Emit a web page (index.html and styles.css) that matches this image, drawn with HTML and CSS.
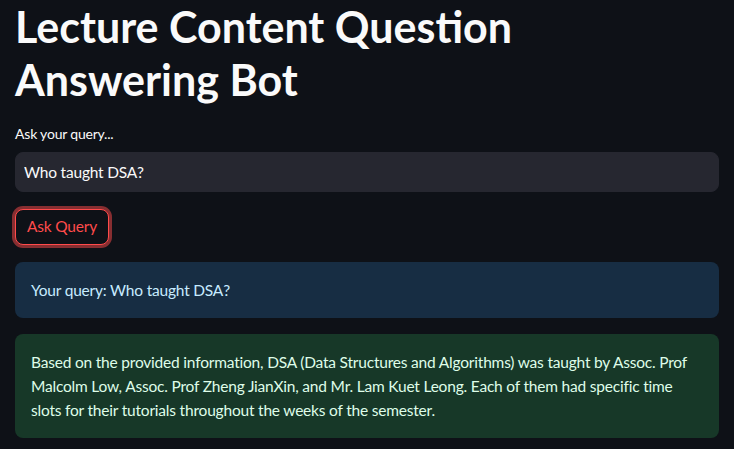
FILE: index.html
```html
<!DOCTYPE html>
<html>
<head>
<meta charset="utf-8">
<link rel="stylesheet" href="styles.css">
</head>
<body>
<main class="page">
  <h1 class="title">Lecture Content Question Answering Bot</h1>
  <div class="field">
    <label class="field-label" for="q">Ask your query...</label>
    <input class="field-input" id="q" type="text" value="Who taught DSA?">
  </div>
  <div class="actions">
    <button class="btn">Ask Query</button>
  </div>
  <div class="alert alert-info">Your query: Who taught DSA?</div>
  <div class="alert alert-success">Based on the provided information, DSA (Data Structures and Algorithms) was taught by Assoc. Prof Malcolm Low, Assoc. Prof Zheng JianXin, and Mr. Lam Kuet Leong. Each of them had specific time slots for their tutorials throughout the weeks of the semester.</div>
</main>
</body>
</html>
```
FILE: styles.css
```css
html, body {
  margin: 0;
  padding: 0;
  background: #0e1117;
  color: #fafafa;
  font-family: Lato, "Noto Sans", sans-serif;
}
.page {
  width: 704px;
  padding: 0 15px;
  display: flex;
  flex-direction: column;
}
.title {
  margin: 0;
  font-size: 43px;
  font-weight: 700;
  line-height: 53px;
  color: #fafafa;
}
.field {
  margin-top: 17px;
  display: flex;
  flex-direction: column;
  gap: 8px;
}
.field-label {
  font-size: 14px;
  line-height: 21px;
  letter-spacing: -0.2px;
  color: #fafafa;
}
.field-input {
  box-sizing: border-box;
  height: 40px;
  width: 100%;
  margin: 0;
  padding: 0 8px;
  border: 1px solid #262730;
  border-radius: 8px;
  background: #262730;
  color: #fafafa;
  font-family: Lato, "Noto Sans", sans-serif;
  font-size: 15.5px;
  letter-spacing: -0.2px;
  outline: none;
}
.actions {
  margin-top: 17px;
  display: flex;
}
.btn {
  box-sizing: border-box;
  height: 36px;
  padding: 0 11px;
  border: 1px solid #ff4b4b;
  border-radius: 8px;
  background: #0e1117;
  color: #ff4b4b;
  font-family: Lato, "Noto Sans", sans-serif;
  font-size: 15.5px;
  letter-spacing: -0.2px;
  line-height: 25.6px;
  box-shadow: 0 0 0 3px rgba(255, 75, 75, 0.5);
}
.alert {
  box-sizing: border-box;
  padding: 16px 20px 16px 16px;
  border-radius: 8px;
  font-size: 15.5px;
  letter-spacing: -0.2px;
  line-height: 24px;
}
.alert-info {
  margin-top: 17px;
  background: #172d43;
  color: #c7ebff;
}
.alert-success {
  margin-top: 16px;
  background: #173828;
  color: #dffde9;
}
```
